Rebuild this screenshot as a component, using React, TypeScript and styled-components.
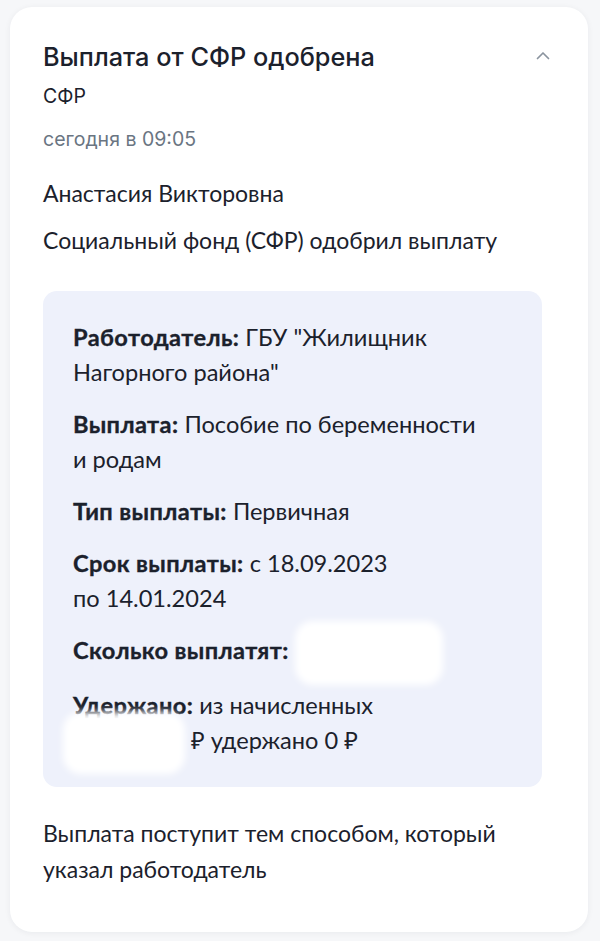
import React from "react";
import styled, { createGlobalStyle } from "styled-components";

const Global = createGlobalStyle`
  html, body {
    margin: 0;
    padding: 0;
    background: #f6f7f9;
  }
  * { box-sizing: border-box; }
`;

const Page = styled.div`
  width: 600px;
  height: 941px;
  overflow: hidden;
  padding: 7px 12px 0 10px;
  background: #f6f7f9;
`;

const Card = styled.div`
  background: #ffffff;
  border-radius: 22px;
  box-shadow: 0 1px 6px rgba(20, 30, 50, 0.06);
  padding: 34px 46px 42px 33px;
  min-height: 925px;
  color: #1b212c;
  font-family: Lato, "Noto Sans", sans-serif;
`;

const Header = styled.div`
  display: flex;
  justify-content: space-between;
  align-items: flex-start;
`;

const Title = styled.h1`
  margin: 0;
  font-family: Inter, "Noto Sans", sans-serif;
  font-size: 25.3px;
  font-weight: 500;
  line-height: 32px;
  color: #1b212c;
`;

const Toggle = styled.button`
  border: 0;
  background: none;
  padding: 0;
  margin: 10px -8px 0 0;
  display: flex;
  cursor: pointer;
`;

const Meta = styled.div<{ $muted?: boolean; $gap: number }>`
  font-family: Inter, "Noto Sans", sans-serif;
  font-size: 19.5px;
  line-height: 24px;
  margin-top: ${(p) => p.$gap}px;
  color: ${(p) => (p.$muted ? "#6a7582" : "#1b212c")};
`;

const Text = styled.p<{ $gap: number }>`
  margin: ${(p) => p.$gap}px 0 0;
  font-size: 23px;
  line-height: 34px;
`;

const InfoBox = styled.div`
  margin-top: 34px;
  background: #eef1fb;
  border-radius: 14px;
  padding: 29px 30px 27px;
  display: flex;
  flex-direction: column;
  gap: 17px;
`;

const Row = styled.div`
  font-size: 23.6px;
  line-height: 35px;
`;

const Label = styled.b`
  font-weight: 700;
  letter-spacing: 0.4px;
  -webkit-text-stroke: 0.35px #1b212c;
`;

const Hidden = styled.span<{ $w: number; $h: number; $shift?: number }>`
  display: inline-block;
  width: ${(p) => p.$w}px;
  height: ${(p) => p.$h}px;
  margin: ${(p) => -(p.$h - 35) / 2}px 0 ${(p) => -(p.$h - 35) / 2}px ${(p) => p.$shift || 0}px;
  vertical-align: middle;
  background: #ffffff;
  border-radius: 18px;
  filter: blur(3.5px);
`;

const Footer = styled.p`
  margin: 28px 0 0;
  font-size: 23px;
  line-height: 36px;
`;

const ChevronUp = () => (
  <svg width="14" height="9" viewBox="0 0 14 9" fill="none">
    <path d="M1.5 7.5L7 2l5.5 5.5" stroke="#8b949f" strokeWidth="1.7" strokeLinecap="round" strokeLinejoin="round" />
  </svg>
);

const rows: { label: string; value: React.ReactNode }[] = [
  { label: "Работодатель:", value: <>ГБУ "Жилищник<br />Нагорного района"</> },
  { label: "Выплата:", value: <>Пособие по беременности<br />и родам</> },
  { label: "Тип выплаты:", value: "Первичная" },
  { label: "Срок выплаты:", value: <>с 18.09.2023<br />по 14.01.2024</> },
  { label: "Сколько выплатят:", value: <Hidden $w={148} $h={64} /> },
  {
    label: "Удержано:",
    value: (
      <>
        из начисленных
        <br />
        <Hidden $w={122} $h={62} $shift={-10} /> ₽ удержано 0 ₽
      </>
    ),
  },
];

export default function App() {
  return (
    <Page>
      <Global />
      <Card>
        <Header>
          <Title>Выплата от СФР одобрена</Title>
          <Toggle aria-label="Свернуть">
            <ChevronUp />
          </Toggle>
        </Header>
        <Meta $gap={11}>СФР</Meta>
        <Meta $gap={19} $muted>сегодня в 09:05</Meta>
        <Text $gap={25}>Анастасия Викторовна</Text>
        <Text $gap={13}>Социальный фонд (СФР) одобрил выплату</Text>
        <InfoBox>
          {rows.map((r) => (
            <Row key={r.label}>
              <Label>{r.label}</Label> {r.value}
            </Row>
          ))}
        </InfoBox>
        <Footer>
          Выплата поступит тем способом, который
          <br />
          указал работодатель
        </Footer>
      </Card>
    </Page>
  );
}
